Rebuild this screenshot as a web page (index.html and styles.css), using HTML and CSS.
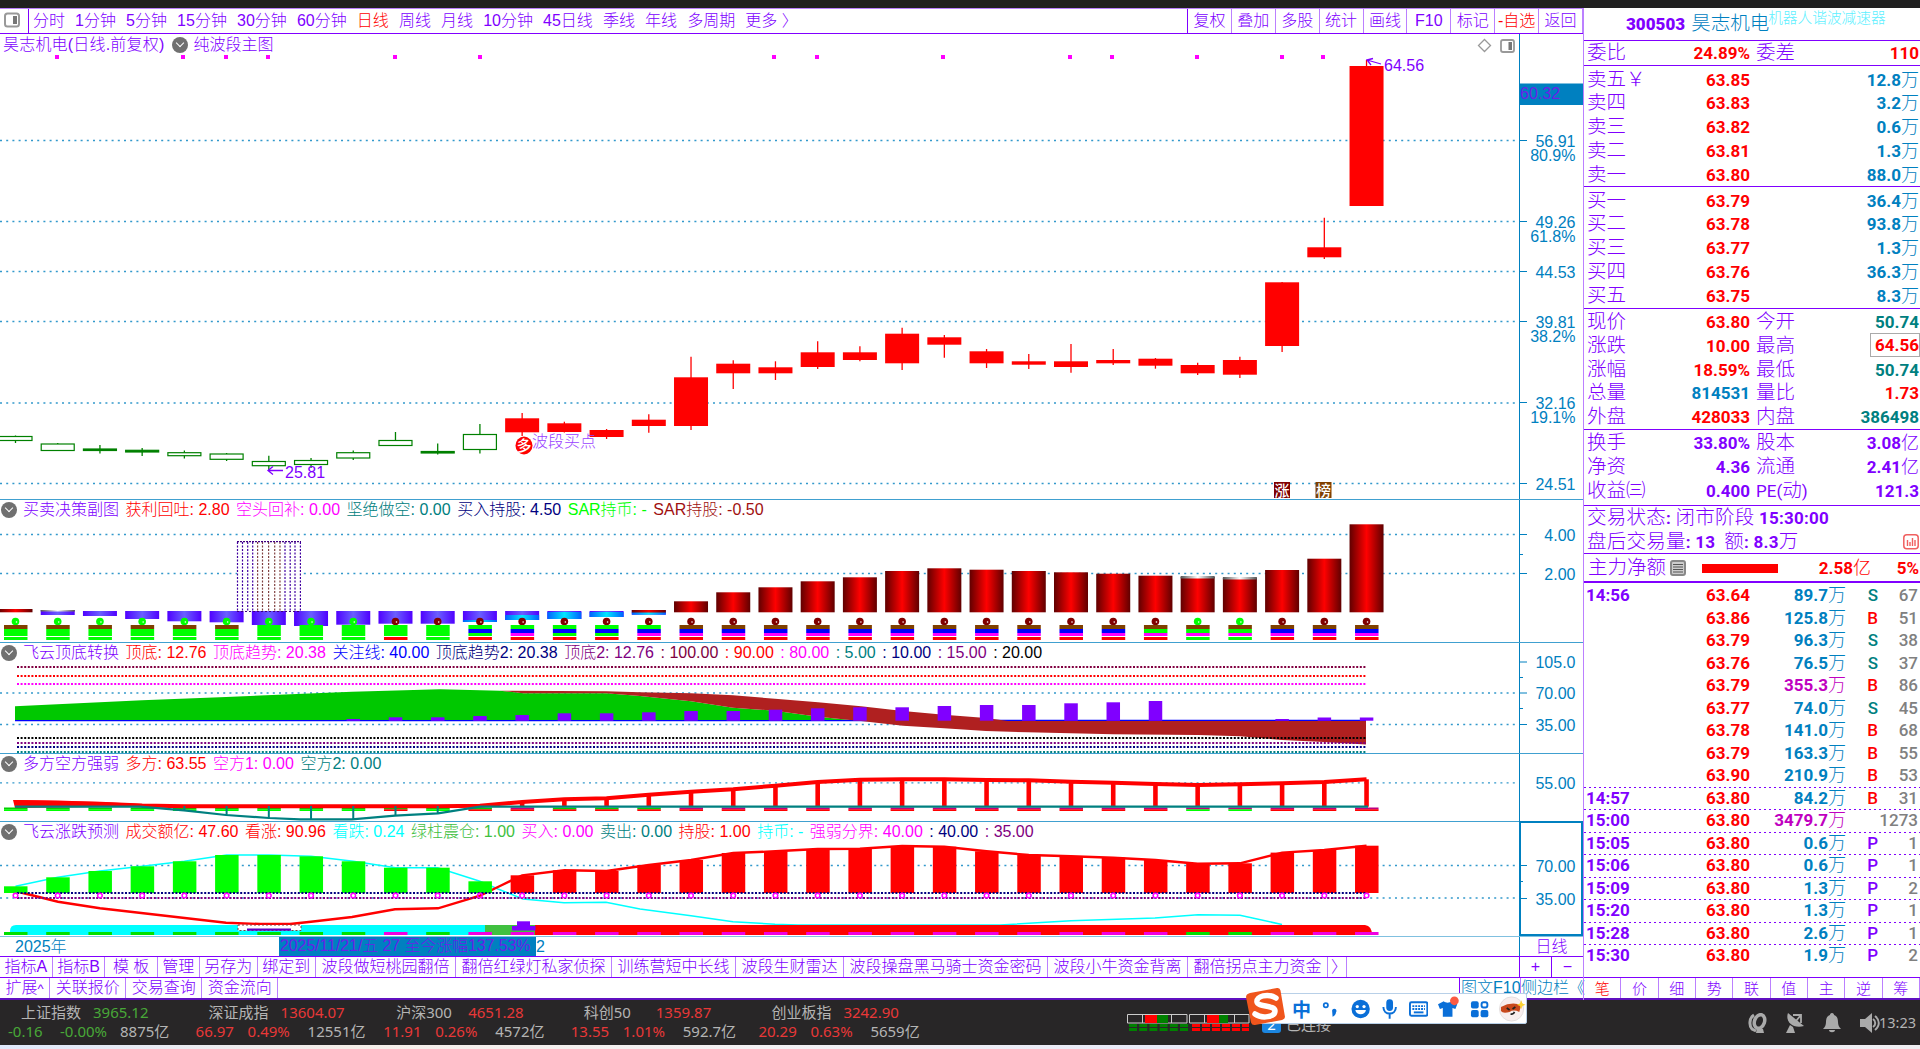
FILE: index.html
```html
<!DOCTYPE html>
<html lang="zh-CN">
<head>
    <meta charset="UTF-8">
    <title>昊志机电 300503</title>
    <link rel="stylesheet" href="styles.css">
</head>
<body>
    <div class="titlebar"></div>

    <div class="workspace">
        <main class="left">
            <nav class="toolbar">
                <div class="layout-btn">
                    <svg width="16" height="16" viewBox="0 0 16 16"><rect x="1" y="1.5" width="14" height="13" rx="2.5" fill="#fff" stroke="#999" stroke-width="2"/><rect x="9" y="4" width="4" height="8" fill="#777"/></svg>
                </div>
                <div class="periods">
                    <span>分时</span><span>1分钟</span><span>5分钟</span><span>15分钟</span><span>30分钟</span><span>60分钟</span><span class="red">日线</span><span>周线</span><span>月线</span><span>10分钟</span><span>45日线</span><span>季线</span><span>年线</span><span>多周期</span><span>更多 〉</span>
                </div>
                <div class="tools">
                    <span>复权</span><span>叠加</span><span>多股</span><span>统计</span><span>画线</span><span>F10</span><span>标记</span><span class="red">-自选</span><span>返回</span>
                </div>
            </nav>

            <section class="panel panel-main">
                <svg id="chart-main" width="1583" height="465" viewBox="0 34 1583 465"></svg>
                <div class="legend">
                    <span class="title">昊志机电(日线.前复权)</span><i class="fold"></i><span>纯波段主图</span>
                </div>
            </section>

            <section class="panel panel-macd">
                <svg id="chart-macd" width="1583" height="143" viewBox="0 499 1583 143"></svg>
                <div class="legend">
                    <i class="fold"></i><span>买卖决策副图</span><span class="red">获利回吐: 2.80</span><span class="magenta">空头回补: 0.00</span><span class="teal">坚绝做空: 0.00</span><span class="navy">买入持股: 4.50</span><span class="lime">SAR持币: -</span><span class="maroon">SAR持股: -0.50</span>
                </div>
            </section>

            <section class="panel panel-trend">
                <svg id="chart-trend" width="1583" height="111" viewBox="0 642 1583 111"></svg>
                <div class="legend">
                    <i class="fold"></i><span>飞云顶底转换</span><span class="red">顶底: 12.76</span><span class="magenta">顶底趋势: 20.38</span><span class="blue">关注线: 40.00</span><span class="navy">顶底趋势2: 20.38</span><span class="plum">顶底2: 12.76</span><span class="wine">: 100.00</span><span class="red">: 90.00</span><span class="magenta">: 80.00</span><span class="teal">: 5.00</span><span class="navy">: 10.00</span><span class="plum">: 15.00</span><span class="black">: 20.00</span>
                </div>
            </section>

            <section class="panel panel-power">
                <svg id="chart-power" width="1583" height="68" viewBox="0 753 1583 68"></svg>
                <div class="legend">
                    <i class="fold"></i><span>多方空方强弱</span><span class="red">多方: 63.55</span><span class="magenta">空方1: 0.00</span><span class="teal">空方2: 0.00</span>
                </div>
            </section>

            <section class="panel panel-forecast">
                <svg id="chart-forecast" width="1583" height="115" viewBox="0 821 1583 115"></svg>
                <div class="legend">
                    <i class="fold"></i><span>飞云涨跌预测</span><span class="red">成交额亿: 47.60</span><span class="red">看涨: 90.96</span><span class="cyan">看跌: 0.24</span><span class="green">绿柱震仓: 1.00</span><span class="magenta">买入: 0.00</span><span class="teal">卖出: 0.00</span><span class="red">持股: 1.00</span><span class="cyan">持币: -</span><span class="magenta">强弱分界: 40.00</span><span class="navy">: 40.00</span><span class="plum">: 35.00</span>
                </div>
            </section>

            <div class="dates">
                <span class="year">2025年</span>
                <span class="cursor-date">2025/11/21/五 27 至今涨幅137.53%</span><span class="month">2</span>
                <span class="cycle">日线</span>
            </div>

            <div class="tabs">
                <span class="short">指标A</span><span class="short">指标B</span><span class="short wide">模 板</span><span class="short">管理</span><span class="short">另存为</span><span class="short">绑定到</span><span>波段做短桃园翻倍</span><span>翻倍红绿灯私家侦探</span><span>训练营短中长线</span><span>波段生财雷达</span><span>波段操盘黑马骑士资金密码</span><span>波段小牛资金背离</span><span>翻倍拐点主力资金</span><span class="more">〉</span>
                <div class="scale"><b>+</b><b>−</b></div>
            </div>
            <div class="tabs tabs-sub">
                <span>扩展<small>^</small></span><span>关联报价</span><span>交易查询</span><span>资金流向</span>
                <div class="side-links"><b>图文F10</b><b>侧边栏《</b></div>
            </div>
        </main>

        <aside class="quote">
            <header class="stock">
                <b>300503</b><span class="name">昊志机电</span><span class="concept">机器人谐波减速器</span>
            </header>
            <div class="group" id="weibi"></div>
            <div class="group" id="asks"></div>
            <div class="group" id="bids"></div>
            <div class="group" id="price"></div>
            <div class="group" id="capital"></div>
            <div class="group state">
                <div><span>交易状态</span>: <span>闭市阶段</span> 15:30:00</div>
                <div><span>盘后交易量</span>: 13 &nbsp;<span>额</span>: 8.3<span>万</span>
                    <svg width="16" height="16" viewBox="0 0 16 16"><rect x=".8" y=".8" width="14.4" height="14" rx="3" fill="none" stroke="#f06060" stroke-width="1.5"/><path d="M4.5 6v6M7 8v4M9.5 4v8M12 6v6" stroke="#f06060" stroke-width="1.4"/></svg>
                </div>
            </div>
            <div class="group netflow">
                <span class="lbl">主力净额</span>
                <svg width="16" height="16" viewBox="0 0 16 16"><rect x="1" y="1" width="14" height="14" rx="2" fill="#ccc" stroke="#888" stroke-width="2"/><path d="M3 4.5h10M3 7h10M3 9.5h10M3 12h10" stroke="#555"/></svg>
                <i class="flow-bar"></i>
                <span class="amount">2.58<em>亿</em></span><span class="pct">5%</span>
            </div>
            <div class="ticks" id="ticks"></div>
            <div class="quote-tabs">
                <span class="red">笔</span><span>价</span><span>细</span><span>势</span><span>联</span><span>值</span><span>主</span><span>逆</span><span>筹</span>
            </div>
        </aside>
    </div>

    <footer class="status">
        <div class="indices" id="indices"></div>
        <svg class="meter" width="124" height="20" viewBox="0 0 124 20">
            <path d="M.5 2.5h59.5v8.5H.5zM62.5 2.5H122v8.5H62.5zM15.5 2.5v8.5M44.5 2.5v8.5M77.5 2.5v8.5M107.5 2.5v8.5" fill="none" stroke="#ccc"/>
            <path d="M18 3h12v8H18zM80 3h12v8H80z" fill="#f00"/><path d="M30 3h11v8H30zM92 3h9v8H92z" fill="#008000"/>
            <path d="M2 13.5h60M2 17.5h60" stroke="#008000" stroke-width="3" stroke-dasharray="8 2.2"/>
            <path d="M65 13.5h57M65 17.5h57" stroke="#f00" stroke-width="3" stroke-dasharray="8 2"/>
        </svg>
        <div class="link"><i>2</i><span>已连接</span></div>
        <div class="tray">
            <svg width="20" height="20" viewBox="0 0 20 20"><path d="M6 2C1 5 1 13 4 16l4 2" fill="none" stroke="#aaa" stroke-width="3"/><ellipse cx="11.500" cy="8.500" rx="5" ry="7" transform="rotate(20 11.500 8.500)" fill="none" stroke="#aaa" stroke-width="3.500"/><path d="M9 15l6 1 1 4H8z" fill="#aaa"/></svg>
            <svg width="20" height="20" viewBox="0 0 20 20"><path d="M3 0c-3 8 4 16 16 13z" fill="#aaa"/><path d="M8 2h8v8M11 8l5-6" fill="none" stroke="#aaa" stroke-width="1.8"/><path d="M5 12l-4 8h9l-2-6z" fill="#aaa"/></svg>
            <svg width="20" height="20" viewBox="0 0 20 20"><path d="M10 0c1.5 0 2 1 2 2 3 1 4 3.500 4 7 0 3 1 5 3 7H1c2-2 3-4 3-7 0-3.500 1-6 4-7 0-1 .5-2 2-2zM7 17h6c0 3-6 3-6 0z" fill="#aaa"/></svg>
            <div class="clock"><svg width="24" height="20" viewBox="0 0 24 20"><path d="M1 6h5l7-6v20l-7-6H1z" fill="#aaa"/><path d="M14 6c3 2 3 6 0 8M16 3c5 4 5 10 0 14" fill="none" stroke="#aaa" stroke-width="2"/></svg>13:23</div>
        </div>
    </footer>
    <div class="desktop"></div>

    <div class="ime">
        <svg class="ime-logo" width="42" height="40" viewBox="0 0 42 40"><path d="M6 6L33 1q3-.5 3.500 2.500L41 30q0 2-3 3L11 38q-3 .5-4-2.500L2 10q0-3 4-4z" fill="#f0551c"/><path d="M32 11C24 6 12 9 13 15c1 5 18 3 18 9 0 6-13 8-20 3" fill="none" stroke="#fff" stroke-width="5.5" stroke-linecap="round"/></svg>
        <b class="zh">中</b>
        <svg width="20" height="20" viewBox="0 0 20 20"><circle cx="5" cy="6" r="2.2" fill="none" stroke="#0a6fd8" stroke-width="1.8"/><path d="M11.500 11.500a2.300 2.300 0 114 2c0 2-1.500 3.500-3.500 4.500z" fill="#0a6fd8"/></svg>
        <svg width="20" height="20" viewBox="0 0 20 20"><circle cx="10" cy="10" r="9.500" fill="#0a6fd8"/><circle cx="6.500" cy="7.500" r="1.700" fill="#fff"/><circle cx="13.500" cy="7.500" r="1.700" fill="#fff"/><path d="M4.500 11h11c-1 6-10 6-11 0z" fill="#fff"/></svg>
        <svg width="20" height="20" viewBox="0 0 20 20"><rect x="6.500" y="0" width="7" height="12" rx="3.500" fill="#0a6fd8"/><path d="M3.500 8c0 9 13 9 13 0M10 15v5" fill="none" stroke="#0a6fd8" stroke-width="2"/></svg>
        <svg width="20" height="20" viewBox="0 0 20 20"><rect x="1" y="3" width="18" height="14" rx="1.500" fill="none" stroke="#0a6fd8" stroke-width="2"/><path d="M3.500 7h13M3.500 10h13" stroke="#0a6fd8" stroke-width="2" stroke-dasharray="2 1"/><path d="M5 13.500h10" stroke="#0a6fd8" stroke-width="2"/></svg>
        <svg width="22" height="26" viewBox="0 0 22 26"><path d="M6 5c2 2 6 2 8 0l6 3-2 5-3-1v9H5v-9l-3 1-2-5z" fill="#0a6fd8"/><circle cx="17" cy="4.500" r="4.500" fill="#fb5a43"/></svg>
        <svg width="20" height="20" viewBox="0 0 20 20"><g fill="#0a6fd8"><rect x="1" y="2" width="8" height="7.500" rx="2"/><rect x="1" y="11" width="8" height="7.500" rx="2"/><rect x="11" y="11" width="8" height="7.500" rx="2"/></g><rect x="12" y="3" width="6" height="5.500" rx="2" fill="none" stroke="#0a6fd8" stroke-width="2"/></svg>
        <svg width="28" height="28" viewBox="0 0 28 28"><circle cx="13" cy="14" r="12.500" fill="#f8eeee" stroke="#e3dede"/><path d="M2 12q11-6 21-2l-2 7q-6-3-10 0-7 2-9-1z" fill="#c8491d"/><path d="M8 13l3 2M14 14l3-2M12 19q3 1 4-2" stroke="#222" stroke-width="1.800" fill="none"/><path d="M23 5l1.300 3.200 3.200 1.300-3.200 1.300L23 14l-1.300-3.200-3.200-1.300 3.200-1.300z" fill="#fcd535"/></svg>
    </div>

    <script src="script.js"></script>
</body>
</html>
```
FILE: styles.css
```css
:root {
    --purple: #8000ff;
    --purple-soft: #bb80ff;
    --axis: #0080c0;
    --dark: #282627;
    --cjk: "Noto Sans CJK SC", sans-serif;
}

* {
    box-sizing: border-box;
}

body {
    margin: 0;
    width: 1920px;
    height: 1049px;
    overflow: hidden;
    position: relative;
    display: flex;
    flex-direction: column;
    background: #fff;
    color: var(--purple);
    font: 300 16px/20px "Liberation Sans", var(--cjk);
}

.red { color: #ff0000; }
.magenta { color: #ff00ff; }
.teal { color: #008080; }
.navy { color: #000080; }
.blue { color: #0000ff; }
.lime { color: #00ff00; }
.green { color: #40c040; }
.cyan { color: #00ffff; }
.maroon { color: #a01010; }
.plum { color: #800080; }
.wine { color: #800040; }
.black { color: #000; }

.titlebar {
    height: 8px;
    background: #202020;
}

.workspace {
    display: flex;
    height: 992px;
}

.left {
    width: 1583px;
    display: flex;
    flex-direction: column;
}

/* period toolbar */
.toolbar {
    flex: none;
    height: 26px;
    display: flex;
    border-top: 1px solid var(--purple-soft);
    border-bottom: 1px solid var(--purple);
    line-height: 23px;
    white-space: nowrap;
}

.layout-btn {
    width: 29px;
    padding: 3px 0 0 4px;
    border-right: 1px solid var(--purple);
}

.layout-btn svg {
    display: block;
}

.periods {
    flex: 1;
    display: flex;
    gap: 10.1px;
    padding-left: 4px;
}

.tools {
    display: flex;
    border-left: 1px solid var(--purple);
}

.tools span {
    width: 43.9px;
    text-align: center;
    border-right: 1px solid var(--purple-soft);
}

/* chart panels */
.panel {
    display: grid;
    flex: none;
}

.panel svg,
.legend {
    grid-area: 1 / 1;
    display: block;
}

.legend {
    display: flex;
    align-items: center;
    align-self: start;
    gap: 6.5px;
    height: 21px;
    white-space: nowrap;
}

.panel-main .legend {
    padding-left: 3px;
    gap: 5px;
}

.panel-main .title {
    letter-spacing: .2px;
}

.fold {
    width: 16px;
    height: 16px;
    border-radius: 50%;
    background: #707070;
    display: grid;
    place-items: center;
}

.fold::after {
    content: "";
    width: 5px;
    height: 5px;
    margin-top: -3px;
    border: solid #fff;
    border-width: 0 1.5px 1.5px 0;
    transform: rotate(45deg);
}

.panel-main .fold {
    margin: 0 1px 0 2px;
}

.legend > .fold:first-child {
    margin-right: -.5px;
    margin-left: 1px;
}

.panel text {
    font-family: "Liberation Sans", var(--cjk);
    font-size: 16px;
}

.panel .seal {
    font-size: 15px;
    font-weight: 500;
}

.dates {
    flex: none;
    height: 20px;
    display: flex;
    align-items: center;
    color: var(--axis);
    white-space: nowrap;
    border-top: 1px solid #80c0e0;
}

.year {
    width: 279px;
    padding-left: 15px;
}

.cursor-date {
    width: 257px;
    height: 19px;
    padding-left: 1px;
    background: var(--axis);
    color: #6a20e8;
    line-height: 18px;
    letter-spacing: -.1px;
}

.month {
    flex: 1;
}

.cycle {
    width: 64px;
    text-align: center;
    color: var(--purple);
    border-left: 1px solid var(--axis);
}

.tabs {
    flex: none;
    height: 21px;
    display: flex;
    border-top: 1px solid var(--purple);
    line-height: 20px;
    white-space: nowrap;
}

.tabs > span {
    padding: 0 5.5px;
    border-right: 1px solid var(--purple-soft);
}

.tabs > .short { padding: 0 4.5px; }
.tabs > .wide { padding: 0 7.5px; }
.tabs > .more { width: 19px; padding: 0 0 0 3px; }

.scale {
    display: flex;
    width: 64px;
    margin-left: auto;
    border-left: 1px solid var(--purple);
}

.scale b {
    flex: 1;
    text-align: center;
    font-weight: 400;
}

.scale b + b {
    border-left: 1px solid var(--purple);
}

.tabs-sub {
    border-bottom: 2px solid #6010c0;
    height: 23px;
    line-height: 20px;
}

.tabs-sub small {
    font-size: 13px;
}

.side-links {
    display: flex;
    width: 124px;
    margin-left: auto;
    padding-left: 1px;
    border-left: 1px solid var(--purple);
    color: var(--axis);
}

.side-links b {
    font-weight: 300;
    width: 59px;
}

.side-links b + b {
    width: 63px;
    border-left: 1px solid var(--purple-soft);
}

/* quote sidebar */
.quote {
    width: 337px;
    display: flex;
    flex-direction: column;
    border-left: 1px solid var(--purple-soft);
    font: 700 17px/24px Roboto, var(--cjk);
}

.quote span,
.quote em {
    white-space: nowrap;
}

.stock {
    flex: none;
    height: 33px;
    display: flex;
    padding-left: 42px;
    line-height: 33px;
    border-bottom: 1px solid var(--purple);
}

.name {
    margin-left: 6px;
    width: 77px;
    font-size: 19.5px;
    font-weight: 300;
    color: var(--axis);
    line-height: 32px;
}

.concept {
    font-size: 14.7px;
    font-weight: 300;
    color: #60f0ff;
    line-height: 20px;
}

.group {
    flex: none;
    border-bottom: 1px solid var(--purple);
    padding: 1px 1px 0 3px;
}

.row {
    display: grid;
    grid-template-columns: 60px 103px 49px 1fr;
    height: 23.75px;
}

.row em,
.ticks em,
.netflow em,
.state span {
    font-style: normal;
    font-weight: 300;
}

.row em { font-size: 18px; }

.row .lbl,
.netflow .lbl,
.state span {
    font-size: 19.5px;
    font-weight: 300;
    color: var(--purple);
}

.row .lbl b {
    font-size: 17px;
}

.row .val {
    text-align: right;
}

.row .lbl + .val + .lbl {
    padding-left: 6px;
}

.row .boxed {
    justify-self: end;
    width: 48px;
    height: 22px;
    line-height: 22px;
    outline: 1px solid #aaa;
}

#weibi { height: 25px; padding-top: 0; }
#asks { height: 121px; padding-top: 1.5px; }
#bids { height: 121.5px; padding-top: 1.5px; }
#price { height: 121.3px; padding-top: 1.5px; }
#capital { height: 76.3px; padding-top: 1.5px; }

.state {
    height: 48.3px;
    padding-top: 0;
    letter-spacing: .25px;
}

.state div {
    display: flex;
    height: 23.7px;
    white-space: pre;
}

.state svg {
    margin: 4px 0 0 auto;
}

.netflow {
    height: 29px;
    display: flex;
    align-items: center;
    color: #ff0000;
    padding-left: 4px;
    border-bottom-width: 2px;
}

.netflow svg { margin-left: 4px; }

.flow-bar {
    width: 76px;
    height: 9px;
    margin-left: 16px;
    background: #ff0000;
}

.amount { margin-left: auto; }
.netflow em { font-size: 18px; }
.pct { width: 48px; text-align: right; }

.ticks {
    flex: 1;
    padding-top: 1px;
}

.tick {
    display: grid;
    grid-template-columns: 80px 84px 96px 32px 1fr;
    height: 22.5px;
    line-height: 22px;
    padding: 0 2px 0 2px;
    text-align: right;
}

.tick > :first-child { text-align: left; }
.tick > :nth-child(2) { color: #ff0000; }
.tick > :nth-child(3) { color: var(--axis); }
.tick > :nth-child(3).big { color: #c000c0; }
.tick > :nth-child(4) { font-weight: 500; }
.tick > :last-child { color: #808080; font-weight: 500; }
.tick em { font-size: 18px; }

.tick.ruled {
    background: repeating-linear-gradient(90deg, var(--purple) 0 2px, transparent 2px 5px) top / 100% 1px no-repeat;
}

.quote-tabs {
    flex: none;
    height: 23px;
    display: flex;
    border-top: 1px solid var(--purple);
    border-bottom: 2px solid #6010c0;
    font: 300 15px/20px var(--cjk);
}

.quote-tabs span {
    flex: 1;
    text-align: center;
    border-right: 1px solid var(--purple-soft);
}

/* status bar */
.status {
    height: 45px;
    display: flex;
    background: var(--dark);
    color: #b4b4b4;
    font: 400 15px/18.5px "Noto Sans", var(--cjk);
    white-space: nowrap;
}

.indices {
    display: flex;
    width: 1127px;
    padding: 3px 0 0 8px;
}

.index {
    width: 187.6px;
}

.index div {
    display: grid;
    grid-template-columns: 52px 60px 1fr;
}

.index .top {
    grid-template-columns: 72px 1fr;
    padding-left: 13px;
}

.up { color: #e83838; }
.down { color: #48a838; }

.meter {
    margin-top: 12px;
}

.link {
    display: flex;
    gap: 5px;
    padding: 15px 0 0 11px;
}

.link i {
    width: 19px;
    height: 18px;
    border-radius: 3px;
    background: #1c86e0;
    color: #fff;
    font-style: normal;
    text-align: center;
}

.tray {
    margin-left: auto;
    display: flex;
    align-items: center;
    gap: 17px;
    padding-right: 4px;
}

.clock {
    display: flex;
    align-items: center;
    font-size: 14.5px;
}

.clock svg {
    margin-right: -4px;
}

.desktop {
    height: 4px;
    background: linear-gradient(90deg, #dfe8fb, #f6eee9 18%, #f4f1f4 40%, #e9eaf8 60%, #f0eef2);
}

/* input method bar floats over the status bar */
.ime {
    position: absolute;
    left: 1254px;
    top: 993px;
    width: 273px;
    height: 31px;
    display: flex;
    align-items: center;
    gap: 10px;
    padding-left: 37px;
    background: #fff;
    border: 1px solid #b8d0e8;
    border-radius: 2px;
}

.ime-logo {
    position: absolute;
    left: -11px;
    top: -7px;
}

.ime .zh {
    width: 20px;
    color: #0a6fd8;
    font: 700 19px/28px var(--cjk);
}
```
FILE: script.js
```javascript
const AXIS = '#0080c0';
const PURPLE = '#8000ff';
const STEP = 42.22;
const LAST = 32;
const cx = i => 15.5 + STEP * i;

const rect = (x, y, w, h, fill, extra = '') => `<rect x="${x}" y="${y}" width="${w}" height="${h}" fill="${fill}" ${extra}/>`;
const line = (x1, y1, x2, y2, stroke, w = 1, extra = '') => `<line x1="${x1}" y1="${y1}" x2="${x2}" y2="${y2}" stroke="${stroke}" stroke-width="${w}" ${extra}/>`;
const poly = (pts, stroke, w) => `<polyline points="${pts.join(' ')}" fill="none" stroke="${stroke}" stroke-width="${w}"/>`;
const area = (pts, fill) => `<polygon points="${pts.join(' ')}" fill="${fill}"/>`;
const text = (x, y, s, fill, extra = '') => `<text x="${x}" y="${y}" fill="${fill}" ${extra}>${s}</text>`;
const grid = y => line(0, y, 1515, y, AXIS, 1.3, 'stroke-dasharray="2 4.2" opacity=".8"');
const dots = (y, color) => line(17, y, 1366, y, color, 2, 'stroke-dasharray="2 1.6"');
const label = (y, s, tick = true) => (tick ? line(1520, y, 1527, y, AXIS) : '') + text(1575.5, y + 6, s, AXIS, 'text-anchor="end"');
const minor = y => line(1520, y, 1523, y, AXIS);

function frame(y1, y2, top = true) {
    return line(1519.5, y1, 1519.5, y2, AXIS) + (top ? line(0, y1 + .5, 1583, y1 + .5, '#40a0d0', 1.2) : '');
}

function draw(id, svg) {
    document.getElementById(id).innerHTML = svg;
}

// Main chart: [high, body top, body bottom, low]
const candles = [
    [435.5, 436.5, 440.5, 443], [443, 444, 450.5, 451], [445, 449, 450.5, 453.5], [448, 450.3, 452, 456],
    [450.5, 452.7, 455.7, 458.5], [453, 454, 459.3, 461], [455.7, 461.5, 465.7, 470], [458, 460.5, 464.5, 468],
    [450.5, 452.7, 458, 460], [432, 440.5, 445.5, 446], [443.5, 451.5, 453, 454.5], [424, 434.5, 449.5, 453.5],
    [413, 418.3, 432.3, 436], [421.7, 423.3, 432, 432.5], [429, 430, 437, 439], [414.3, 419.7, 426, 432.7],
    [356.7, 377.3, 426, 430], [360.3, 363.7, 373.3, 389], [361.3, 367.3, 373.3, 380], [341.3, 352.3, 367, 369],
    [346.3, 352.3, 360, 361.3], [327.7, 333.7, 363.3, 370], [335, 337.3, 344.7, 357.7], [349, 351.3, 363.3, 368],
    [354, 361.3, 364.7, 369], [344, 361.3, 367, 372.7], [349, 360, 363.3, 365], [358, 358.7, 365.7, 368.7],
    [362.7, 365, 373.3, 375], [356.7, 360, 374.7, 378], [282, 282.3, 346, 352], [217.7, 247.3, 257.3, 259],
    [60, 66, 206, 206]
];

function drawMain() {
    let s = [140.5, 221.5, 271.5, 321.5, 403, 483.5].map(grid).join('');
    s += frame(34, 499, false);
    [57, 183, 226, 268, 395, 480, 774, 817, 943, 1070, 1112, 1197, 1282, 1323].forEach(x => { s += rect(x - 2, 55, 4, 4, '#f0f'); });
    candles.forEach(([hi, top, bot, lo], i) => {
        const x = cx(i);
        const color = i < 12 ? '#008000' : '#f00';
        s += line(x, hi, x, lo, color, 1.3);
        if (i < 12) {
            const thin = bot - top < 2;
            s += rect(x - 16.5, top, 33, bot - top, thin ? color : '#fff', `stroke="${color}" stroke-width="1.2"`);
        } else {
            s += rect(x - 17, top, 34, bot - top, color);
        }
    });
    // low / high marks
    s += `<path d="M283 470.5h-15m5-4l-5 4 5 4M1381 64l-14-4m6-1.5l-6 1.5 4 5" fill="none" stroke="${PURPLE}" stroke-width="1.3"/>`;
    s += text(285, 477.5, '25.81', PURPLE) + text(1384, 71, '64.56', PURPLE);
    s += `<ellipse cx="524" cy="445.5" rx="8.5" ry="9" fill="#f00"/>` + text(524, 451, '多', '#fff', 'class="seal" text-anchor="middle"');
    s += text(532, 446.5, '波段买点', '#9a40ff');
    s += rect(1274, 482, 16, 16, '#800000') + text(1282, 495.5, '涨', '#fff', 'class="seal" text-anchor="middle"');
    s += rect(1315.5, 482, 16, 16, '#804000') + text(1323.5, 495.5, '榜', '#fff', 'class="seal" text-anchor="middle"');
    s += `<path d="M1484.5 39.5l6 6-6 6-6-6z" fill="none" stroke="#999" stroke-width="1.3"/>`;
    s += `<rect x="1501" y="40" width="13" height="12" rx="2" fill="#fff" stroke="#999" stroke-width="1.8"/>` + rect(1508.5, 42, 3.5, 8, '#777');
    s += label(140.5, '56.91') + label(154.5, '80.9%', false) + label(221.5, '49.26') + label(235.5, '61.8%', false);
    s += label(271.5, '44.53') + label(321.5, '39.81') + label(335.5, '38.2%', false);
    s += label(402.5, '32.16') + label(416.5, '19.1%', false) + label(483.5, '24.51');
    s += rect(1519, 83.5, 64, 21.5, AXIS) + text(1520, 99, '60.32', '#6a20e8');
    draw('chart-main', s);
}

// Cylinders and signal stacks
const barTops = [609, 610, 611, 611, 611, 611, 611, 611, 611, 611, 611, 611, 611, 611, 611, 610,
    601.3, 592.3, 587.3, 581.3, 577.3, 571, 568.3, 569.7, 571, 572.3, 573.7, 575.7, 577, 578, 570, 558.7, 524.3];
const barBottoms = [612, 615, 616, 619, 621.3, 622.3, 625, 626, 624.7, 623.7, 623.7, 622, 620, 619, 617, 614.7];
const B = '#804000', G = '#00ff00', U = '#0000ff', M = '#ff00ff', R = '#ff0000';

function stackOf(i) {
    if (i < 6) return [B, G, G, G];
    if (i < 9 || i === 10) return [G, G, G, G];
    if (i === 9) return [G, G, G, R];
    if (i === 11 || i === 13 || i === 14) return [G, U, G, R];
    if (i === 12 || i === 15) return [G, U, M, R];
    if (i === 27) return [B, G, M, R];
    if (i === 28 || i === 29) return [B, G, M, G];
    return [B, U, M, R];
}

function drawMacd() {
    const grad = (id, edge, mid) => `<linearGradient id="${id}"><stop offset="0" stop-color="${edge}"/><stop offset=".5" stop-color="${mid}"/><stop offset="1" stop-color="${edge}"/></linearGradient>`;
    let s = '<defs>' + grad('gRed', '#600000', '#ff0000') + grad('gVio', '#5000ff', '#6a60ff') + grad('gSky', '#0060ff', '#00e8ff') + grad('gTip', '#555', '#fff') + '</defs>';
    s += grid(534.5) + grid(573.5) + frame(499, 642);
    for (let i = 0; i <= LAST; i++) {
        const x = cx(i) - 17;
        if (i === 0 || i > 15) {
            s += rect(x, barTops[i], 34, 612.3 - barTops[i], 'url(#gRed)');
            if (i === 28 || i === 29) s += rect(x, barTops[i] - 1, 34, 2.5, 'url(#gTip)');
        } else {
            s += rect(x, barTops[i], 34, barBottoms[i] - barTops[i], 'url(#gVio)');
            if (i === 1) s += rect(x, 610, 34, 1.5, 'url(#gTip)');
            if (i > 10) {
                const h = Math.min(2 + (i - 11) * 3, barBottoms[i] - 612);
                s += rect(x, barBottoms[i] - h, 34, h, 'url(#gSky)');
            }
            if (i === 15) s += rect(x, 610, 34, 2.5, 'url(#gRed)');
        }
    }
    // dotted box
    const xs = [237.5, 242.5, 247.7, 252.7, 257.6, 262.5, 268.6, 274.7, 280, 285, 290.2, 295, 300.4];
    s += rect(237, 541, 64, 70, '#fff');
    xs.forEach((x, n) => { s += line(x, 542, x, 611, n > 3 && n < 9 ? '#804040' : '#4000a0', 1.2, 'stroke-dasharray="2 1.5"'); });
    s += line(237, 541.6, 301, 541.6, '#400080', 1.2, 'stroke-dasharray="2 1"') + line(237, 611.5, 301, 611.5, '#400080', 1, 'stroke-dasharray="2 2"');
    const ys = [625, 629, 633, 637], hs = [4, 4, 3, 3];
    for (let i = 0; i <= LAST; i++) {
        const x = cx(i), green = i < 9 || i === 28 || i === 29;
        s += `<ellipse cx="${x}" cy="621.5" rx="3.8" ry="3.8" fill="${green ? '#0f0' : '#800000'}"/><circle cx="${x + 1}" cy="622" r=".8" fill="#fff"/>`;
        stackOf(i).forEach((c, n) => { s += rect(x - 11.5, ys[n], 23.5, hs[n], c); });
    }
    s += label(534.5, '4.00') + label(573.5, '2.00') + minor(554.5);
    draw('chart-macd', s);
}

// Top / bottom trend bands
function drawTrend() {
    let s = frame(642, 753) + grid(693) + grid(724.5);
    s += dots(667, '#800040') + dots(676, '#f00') + dots(684, '#f0f');
    s += line(15, 720.5, 1366, 720.5, '#0000ff', 1.5);
    const ridge = ['500,690.7', '523,693.3', '606,693.3', '640,696', '691,701.3', '733,707.7', '775,710.7', '818,716.7', '850,720'];
    s += area(['15,720', '15,706.3', '142,700.3', '226,697', '352,691.7', '440,689.3', ...ridge], '#00c800');
    s += area(['500,690.7', '606,691.3', '640,692.3', '691,693.3', '733,695.3', '775,698.7', '818,702.3', '861,706.3', '903,711', '944,714.7', '986,718', '1008,721', '1366,721',
        '1366,744.5', '1324,742', '1282,740', '1240,736.3', '1198,735', '1113,734.3', '1028,732.3', '986,731', '944,728.3', '903,725.7', '861,721', ...ridge.slice(1).reverse()], '#b02020');
    const tops = { 8: 719, 9: 717.3, 10: 717.3, 11: 716, 12: 715, 13: 713.3, 14: 713.3, 15: 712.3, 16: 711, 17: 711, 18: 709.7, 19: 708.3, 20: 707.3, 21: 707.3, 22: 706, 23: 705, 24: 705, 25: 703.3, 26: 702.3, 27: 701, 30: 719, 31: 717.5, 32: 717.5 };
    for (const i in tops) s += rect(cx(i) - 6.7, tops[i], 13.5, 720.7 - tops[i], PURPLE);
    s += dots(738, '#000') + dots(743, '#800080') + dots(747, '#000080') + dots(752, '#008080');
    s += label(662, '105.0') + label(693, '70.00') + label(724.5, '35.00') + minor(677.5) + minor(708.5);
    draw('chart-trend', s);
}

// Long / short strength
function drawPower() {
    let s = frame(753, 821) + grid(782.8);
    const ys = [802, 803, 803.7, 805.5, 806.3, 806.3, 806.3, 806.3, 806.3, 806.3, 806.3, 805.7, 802, 799.3, 798.3, 794.7, 791.7, 789.3, 785.7, 782, 779.7, 779.3, 779.3, 780, 780.3, 781.7, 782.7, 784, 785, 784.3, 783.3, 782, 779.3];
    for (let i = 0; i <= LAST; i++) {
        const x = cx(i) - 11.5;
        s += rect(x, 807.5, 23.5, 2, i < 12 || (i > 12 && i < 16) ? '#00d000' : '#c00080');
        s += rect(x, 809.3, 23.5, 1.7, i === 28 || i === 29 || (i < 11 && i !== 9) ? '#0f0' : '#f00');
        if (i > 11) s += line(cx(i), ys[i], cx(i), 806.7, '#f00', 4.6);
    }
    s += area(['13,800', '58,800.5', '100,802', '142,804', '184,806', '15,808'], '#f00');
    s += poly(ys.map((y, i) => cx(i) + ',' + y), '#f00', 4);
    s += poly(['15,806.7', '140,806.7', '184,810.3', '226,815', '269,818', '300,819.3', '352,819.3', '395,815.7', '438,813.3', '480,806.7', '1368,806.7'], '#008080', 2.2);
    [0, 0, 0, 0, 810, 815, 818, 819, 819, 816, 813].forEach((y, i) => { if (y) s += line(cx(i), 806, cx(i), y, '#008080', 2); });
    s += label(782.8, '55.00', false);
    draw('chart-power', s);
}

// Rise / fall forecast
function drawForecast() {
    const tops = [886.3, 877.3, 871, 866.3, 861.3, 855, 855, 856.3, 861.3, 867.7, 867.7, 881.3, 875.3, 870.3, 871, 865, 860, 853, 851.3, 849, 848.7, 846, 846.7, 851.3, 855, 856.3, 857.7, 860, 863.7, 863.3, 852.6, 850, 845.7];
    let s = frame(821, 936) + grid(865.5) + grid(898);
    s += poly([...tops.slice(0, 12).map((y, i) => cx(i) + ',' + y), '498,889', '523,899', '564,902.7', '606,902.3', '640,909', '691,915.7', '733,921.7', '775,924.3', '798,925', '1000,925', '1071,920.7', '1155,918', '1198,914.7', '1240,915.3', '1282,924.5'], '#0ff', 1.5);
    s += poly(['15,891', '58,901.7', '100,908.3', '226,922.7', '260,924', '290,924', '311,921.7', '352,917', '395,909.3', '438,908.3', '480,895.7', '500,886', ...tops.slice(12).map((y, i) => cx(i + 12) + ',' + y)], '#f00', 2.4);
    tops.forEach((y, i) => { s += rect(cx(i) - 11.5, y, 23.5, 893 - y, i < 12 ? '#0f0' : '#f00'); });
    s += dots(893, '#000080') + dots(898, '#800080');
    s += `<path d="M10 935v-4q0-6 6-6H485v10z" fill="#0ff"/>` + rect(485, 925, 50, 10, '#40c040') + `<path d="M535 925H1365q7 1 7 10H535z" fill="#f00"/>`;
    s += rect(517, 921.3, 13, 5, PURPLE) + rect(512, 926, 23.5, 4.5, PURPLE);
    s += rect(238, 925, 63, 5.5, '#fff', 'stroke="#804040" stroke-dasharray="2 2"') + rect(247, 928.5, 44, 2.2, '#6000c0');
    tops.forEach((y, i) => {
        s += `<circle cx="${cx(i)}" cy="895.5" r="2.3" fill="none" stroke="#f0f" stroke-width="1.5"/>`;
        s += rect(cx(i) - 11.5, 932, 23.5, 3, i < 9 || i === 10 || i === 28 || i === 29 ? '#00e000' : '#f000e0');
    });
    s += label(865.5, '70.00') + label(898.5, '35.00') + minor(881.5);
    s += `<rect x="1520" y="822" width="62" height="113" fill="none" stroke="${AXIS}" stroke-width="2"/>`;
    draw('chart-forecast', s);
}

drawMain();
drawMacd();
drawTrend();
drawPower();
drawForecast();

// Han characters are set in the light face, digits stay bold
const han = s => s.replace(/[\u4e00-\u9fff]+/g, '<em>$&</em>');
const put = (id, html) => { document.getElementById(id).innerHTML = html; };

function rows(list) {
    return list.map(([a, b, bc, c, d, dc]) =>
        `<div class="row"><span class="lbl">${a}</span><span class="val ${bc}">${han(b)}</span><span class="lbl">${c}</span><span class="val ${dc}">${han(d)}</span></div>`).join('');
}

const depth = list => rows(list.map(([a, b, d]) => [a, b, 'red', '', d, 'vol']));

put('weibi', rows([['委比', '24.89%', 'red', '委差', '110', 'red']]));
put('asks', depth([['卖五￥', '63.85', '12.8万'], ['卖四', '63.83', '3.2万'], ['卖三', '63.82', '0.6万'], ['卖二', '63.81', '1.3万'], ['卖一', '63.80', '88.0万']]));
put('bids', depth([['买一', '63.79', '36.4万'], ['买二', '63.78', '93.8万'], ['买三', '63.77', '1.3万'], ['买四', '63.76', '36.3万'], ['买五', '63.75', '8.3万']]));
put('price', rows([
    ['现价', '63.80', 'red', '今开', '50.74', 'teal'],
    ['涨跌', '10.00', 'red', '最高', '64.56', 'red boxed'],
    ['涨幅', '18.59%', 'red', '最低', '50.74', 'teal'],
    ['总量', '814531', 'vol', '量比', '1.73', 'red'],
    ['外盘', '428033', 'red', '内盘', '386498', 'teal']
]));
put('capital', rows([
    ['换手', '33.80%', '', '股本', '3.08亿', ''],
    ['净资', '4.36', '', '流通', '2.41亿', ''],
    ['收益㈢', '0.400', '', '<b>PE(</b>动<b>)</b>', '121.3', '']
]));
document.querySelectorAll('.vol').forEach(el => { el.style.color = AXIS; });

const ticks = [
    ['14:56', '63.64', '89.7', 'S', 67], ['', '63.86', '125.8', 'B', 51], ['', '63.79', '96.3', 'S', 38], ['', '63.76', '76.5', 'S', 37],
    ['', '63.79', '355.3', 'B', 86], ['', '63.77', '74.0', 'S', 45], ['', '63.78', '141.0', 'B', 68], ['', '63.79', '163.3', 'B', 55],
    ['', '63.90', '210.9', 'B', 53], ['14:57', '63.80', '84.2', 'B', 31], ['15:00', '63.80', '3479.7', '', 1273], ['15:05', '63.80', '0.6', 'P', 1],
    ['15:06', '63.80', '0.6', 'P', 1], ['15:09', '63.80', '1.3', 'P', 2], ['15:20', '63.80', '1.3', 'P', 1], ['15:28', '63.80', '2.6', 'P', 1], ['15:30', '63.80', '1.9', 'P', 2]
];
const sideClass = { S: 'teal', B: 'red', P: '' };
put('ticks', ticks.map(([t, p, v, side, n], i) =>
    `<div class="tick${t && i ? ' ruled' : ''}"><span>${t}</span><span>${p}</span><span class="${parseFloat(v) > 300 ? 'big' : ''}">${v}<em>万</em></span><span class="${sideClass[side] || ''}">${side}</span><span>${n}</span></div>`).join(''));

put('indices', [
    ['上证指数', '3965.12', '-0.16', '-0.00%', '8875亿', 'down'],
    ['深证成指', '13604.07', '66.97', '0.49%', '12551亿', 'up'],
    ['沪深300', '4651.28', '11.91', '0.26%', '4572亿', 'up'],
    ['科创50', '1359.87', '13.55', '1.01%', '592.7亿', 'up'],
    ['创业板指', '3242.90', '20.29', '0.63%', '5659亿', 'up']
].map(([name, val, chg, pct, amt, dir]) =>
    `<div class="index"><div class="top"><span>${name}</span><span class="${dir}">${val}</span></div><div><span class="${dir}">${chg}</span><span class="${dir}">${pct}</span><span>${amt}</span></div></div>`).join(''));
```
